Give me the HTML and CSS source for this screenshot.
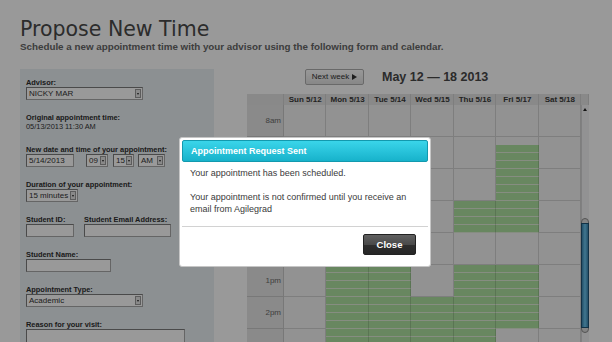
FILE: index.html
```html
<!DOCTYPE html>
<html lang="en">
<head>
<meta charset="utf-8">
<title>Propose New Time</title>
<link rel="stylesheet" href="styles.css">
</head>
<body>
<div class="page">
  <h1 class="title">Propose New Time</h1>
  <p class="subtitle">Schedule a new appointment time with your advisor using the following form and calendar.</p>

  <div class="content">
    <form class="form-panel">
      <div class="field">
        <span class="label">Advisor:</span>
        <div class="control select w-advisor"><span class="val">NICKY MAR</span><span class="arrow"></span></div>
      </div>
      <div class="field">
        <span class="label">Original appointment time:</span>
        <div class="static">05/13/2013 11:30 AM</div>
      </div>
      <div class="field">
        <span class="label">New date and time of your appointment:</span>
        <div class="inline">
          <input class="control w-date" type="text" value="5/14/2013">
          <div class="control select w-hour"><span class="val">09</span><span class="arrow"></span></div>
          <div class="control select w-min"><span class="val">15</span><span class="arrow"></span></div>
          <div class="control select w-ampm"><span class="val">AM</span><span class="arrow"></span></div>
        </div>
      </div>
      <div class="field">
        <span class="label">Duration of your appointment:</span>
        <div class="control select w-dur"><span class="val">15 minutes</span><span class="arrow"></span></div>
      </div>
      <div class="field split">
        <div class="sub w-id">
          <span class="label">Student ID:</span>
          <input class="control" type="text">
        </div>
        <div class="sub w-email">
          <span class="label">Student Email Address:</span>
          <input class="control" type="text">
        </div>
      </div>
      <div class="field">
        <span class="label">Student Name:</span>
        <input class="control w-name" type="text">
      </div>
      <div class="field">
        <span class="label">Appointment Type:</span>
        <div class="control select w-type"><span class="val">Academic</span><span class="arrow"></span></div>
      </div>
      <div class="field">
        <span class="label">Reason for your visit:</span>
        <textarea class="control w-reason"></textarea>
      </div>
    </form>

    <section class="calendar">
      <div class="toolbar">
        <button class="next-btn" type="button">Next week <svg width="5" height="6" viewBox="0 0 5 6"><path d="M0 0L5 3L0 6Z" fill="#333"/></svg></button>
        <h2 class="week-title">May 12 — 18 2013</h2>
      </div>
      <div class="cal">
        <div class="cal-head">
          <span></span>
          <span>Sun 5/12</span><span>Mon 5/13</span><span>Tue 5/14</span><span>Wed 5/15</span><span>Thu 5/16</span><span>Fri 5/17</span><span>Sat 5/18</span>
          <span></span>
        </div>
        <div class="cal-body">
          <div class="cal-grid">
            <div class="time">8am</div>
            <div class="day"></div><div class="day"></div><div class="day"></div><div class="day"></div><div class="day"></div><div class="day"></div><div class="day"></div>

            <div class="time">9am</div>
            <div class="day"></div><div class="day"></div><div class="day"></div><div class="day"></div><div class="day"></div><div class="day g3"></div><div class="day"></div>

            <div class="time">10am</div>
            <div class="day"></div><div class="day"></div><div class="day"></div><div class="day"></div><div class="day"></div><div class="day g4"></div><div class="day"></div>

            <div class="time">11am</div>
            <div class="day"></div><div class="day"></div><div class="day"></div><div class="day"></div><div class="day g4"></div><div class="day g4"></div><div class="day"></div>

            <div class="time">12pm</div>
            <div class="day"></div><div class="day"></div><div class="day"></div><div class="day"></div><div class="day"></div><div class="day"></div><div class="day"></div>

            <div class="time">1pm</div>
            <div class="day"></div><div class="day g4"></div><div class="day g4"></div><div class="day"></div><div class="day g4"></div><div class="day g4"></div><div class="day"></div>

            <div class="time">2pm</div>
            <div class="day"></div><div class="day g4"></div><div class="day g4"></div><div class="day g4"></div><div class="day g4"></div><div class="day g4"></div><div class="day"></div>

            <div class="time">3pm</div>
            <div class="day"></div><div class="day g4"></div><div class="day g4"></div><div class="day g4"></div><div class="day g4"></div><div class="day"></div><div class="day"></div>
          </div>
          <div class="scroll">
            <span class="scroll-up"></span>
            <div class="thumb"><div class="thumb-bar"></div></div>
          </div>
        </div>
      </div>
    </section>
  </div>
</div>

<div class="overlay">
  <div class="dialog" role="dialog">
    <div class="dialog-header">Appointment Request Sent</div>
    <div class="dialog-body">
      <p>Your appointment has been scheduled.</p>
      <p>Your appointment is not confirmed until you receive an email from Agilegrad</p>
    </div>
    <div class="dialog-footer">
      <button class="close-btn" type="button">Close</button>
    </div>
  </div>
</div>
</body>
</html>
```

FILE: styles.css
```css
* { box-sizing: border-box; }

html, body {
  margin: 0;
  height: 342px;
  overflow: hidden;
}

body {
  background: #fff;
  font-family: "Liberation Sans", Arial, sans-serif;
  color: #333;
}

.page {
  padding-left: 20px;
}

.title {
  margin: 19px 0 0;
  font: normal 20.5px/20px "DejaVu Sans", sans-serif;
  color: #4a4a4a;
}

.subtitle {
  margin: 2px 0 0;
  font: bold 9.8px/12px "Liberation Sans", Arial, sans-serif;
  color: #666;
}

.content {
  display: flex;
  align-items: flex-start;
  gap: 33px;
  margin-top: 16px;
}

/* ---------- form panel ---------- */
.form-panel {
  flex: none;
  width: 194px;
  height: 300px;
  margin: 0;
  padding: 9px 6px 0;
  background: #eaf0f3;
}

.field + .field { margin-top: 13px; }

.label {
  display: block;
  font: bold 7.4px/9px "Liberation Sans", Arial, sans-serif;
  color: #2e2e2e;
  white-space: nowrap;
}

.static {
  font: 7.4px/10px "Liberation Sans", Arial, sans-serif;
  color: #333;
}

.control {
  display: block;
  margin: 0;
  height: 13px;
  padding: 0 0 0 2px;
  border: 1px solid #a8a8a8;
  border-top-color: #7c7c7c;
  border-left-color: #7c7c7c;
  border-radius: 0;
  background: #fff;
  font: 8px/11px "Liberation Sans", Arial, sans-serif;
  color: #333;
  outline: none;
}

.select { display: flex; }
.select .val { flex: 1; min-width: 0; white-space: nowrap; }
.select .arrow {
  flex: none;
  width: 6px;
  margin: 1px;
  background: #e4e4e4;
  border: 1px solid #9a9a9a;
  display: flex;
  align-items: center;
  justify-content: center;
}
.select .arrow::after {
  content: "";
  border-left: 1.5px solid transparent;
  border-right: 1.5px solid transparent;
  border-top: 2px solid #222;
}

.inline { display: flex; }
.w-advisor, .w-type { width: 117px; }
.w-date { width: 48px; }
.w-hour { width: 22px; margin-left: 12px; }
.w-min { width: 21px; margin-left: 5px; }
.w-ampm { width: 27px; margin-left: 4px; }
.w-dur { width: 52px; }
.w-name { width: 85px; }
.w-reason { width: 159px; height: 30px; resize: none; }

.split { display: flex; gap: 10px; }
.w-id { width: 48px; }
.w-email { width: 87px; }
.sub .control { width: 100%; }

/* ---------- calendar ---------- */
.calendar {
  flex: none;
  width: 342px;
}

.toolbar {
  display: flex;
  align-items: center;
  height: 16px;
  padding-left: 58px;
}

.next-btn {
  width: 59px;
  height: 16px;
  padding: 0;
  border: 1px solid #b0b0b0;
  border-radius: 2px;
  background: linear-gradient(#fefefe, #e2e2e2);
  font: 8px/1 "Liberation Sans", Arial, sans-serif;
  color: #333;
  display: flex;
  align-items: center;
  justify-content: center;
  gap: 3px;
}

.week-title {
  margin: 0 0 0 18px;
  font: bold 12.5px/16px "Liberation Sans", Arial, sans-serif;
  color: #484848;
}

.cal { margin-top: 9px; }

.cal-head {
  display: grid;
  grid-template-columns: 37px repeat(7, 1fr) 8px;
  height: 11px;
  background: #e4e4e4;
}
.cal-head span {
  font: bold 8px/11px "Liberation Sans", Arial, sans-serif;
  color: #3a3a3a;
  text-align: center;
  white-space: nowrap;
  box-shadow: inset -1px 0 rgba(0, 0, 0, 0.08);
}

.cal-body {
  display: flex;
  height: 280px;
}

.cal-grid {
  flex: 1;
  display: grid;
  grid-template-columns: 37px repeat(7, 1fr);
  grid-auto-rows: 32px;
}

.time {
  background: #e6e6e6;
  font: 8px/32px "Liberation Sans", Arial, sans-serif;
  color: #6a6a6a;
  text-align: right;
  padding-right: 3px;
  box-shadow: inset -1px -1px rgba(0, 0, 0, 0.13);
}

.day {
  background: #f3f3f3;
  box-shadow: inset -1px -1px rgba(0, 0, 0, 0.13);
}

.day.g4 {
  background: repeating-linear-gradient(#ade1a0 0 7px, #dfecd7 7px 8px);
  box-shadow: inset -1px 0 rgba(0, 0, 0, 0.13);
}

.day.g3 {
  background:
    repeating-linear-gradient(#ade1a0 0 7px, #dfecd7 7px 8px) left bottom / 100% 24px no-repeat,
    #f3f3f3;
  box-shadow: inset -1px 0 rgba(0, 0, 0, 0.13);
}

.scroll {
  flex: none;
  width: 8px;
  background: #f4f4f6;
  box-shadow: inset 1px 0 rgba(0, 0, 0, 0.12);
  display: flex;
  flex-direction: column;
  align-items: center;
}

.scroll-up {
  margin-top: 3px;
  border-left: 2px solid transparent;
  border-right: 2px solid transparent;
  border-bottom: 3px solid #222;
}

.thumb {
  margin-top: 107px;
  width: 8px;
  height: 115px;
  padding: 4px 0;
  border: 1px solid #8a8a8a;
  border-radius: 4px;
  background: #dcdcdc;
}

.thumb-bar {
  height: 100%;
  margin: 0 -1px;
  border: 1px solid #1f5373;
  background: linear-gradient(to right, #3b84ae, #6cc6f0 50%, #3b84ae);
}

/* ---------- modal ---------- */
.overlay {
  position: fixed;
  inset: 0;
  background: rgba(0, 0, 0, 0.4);
  display: flex;
  justify-content: center;
  align-items: flex-start;
  padding: 137px 2px 0 0;
}

.dialog {
  width: 252px;
  height: 130px;
  padding: 2px;
  background: #fff;
  border: 1px solid #c6c6c6;
  border-radius: 3px;
  display: flex;
  flex-direction: column;
}

.dialog-header {
  height: 22px;
  padding-left: 8px;
  border: 1px solid #1299ae;
  border-radius: 2px;
  background: linear-gradient(#3ad5ea, #17b2cb);
  font: bold 9px/20px "Liberation Sans", Arial, sans-serif;
  color: #fff;
}

.dialog-body {
  padding: 5px 8px 11px;
  border-bottom: 1px solid #d2d2d2;
  font: 9px/12px "Liberation Sans", Arial, sans-serif;
  color: #3a3a3a;
}
.dialog-body p { margin: 0; }
.dialog-body p + p { margin-top: 12px; }

.dialog-footer {
  display: flex;
  justify-content: flex-end;
  padding: 7px 12px 0 0;
}

.close-btn {
  width: 53px;
  height: 21px;
  padding: 0;
  border: 1px solid #222;
  border-radius: 2px;
  background: linear-gradient(#606060 0, #4a4a4a 50%, #2e2e2e 50%, #262626 100%);
  font: bold 9.5px/1 "Liberation Sans", Arial, sans-serif;
  color: #fff;
}
```
